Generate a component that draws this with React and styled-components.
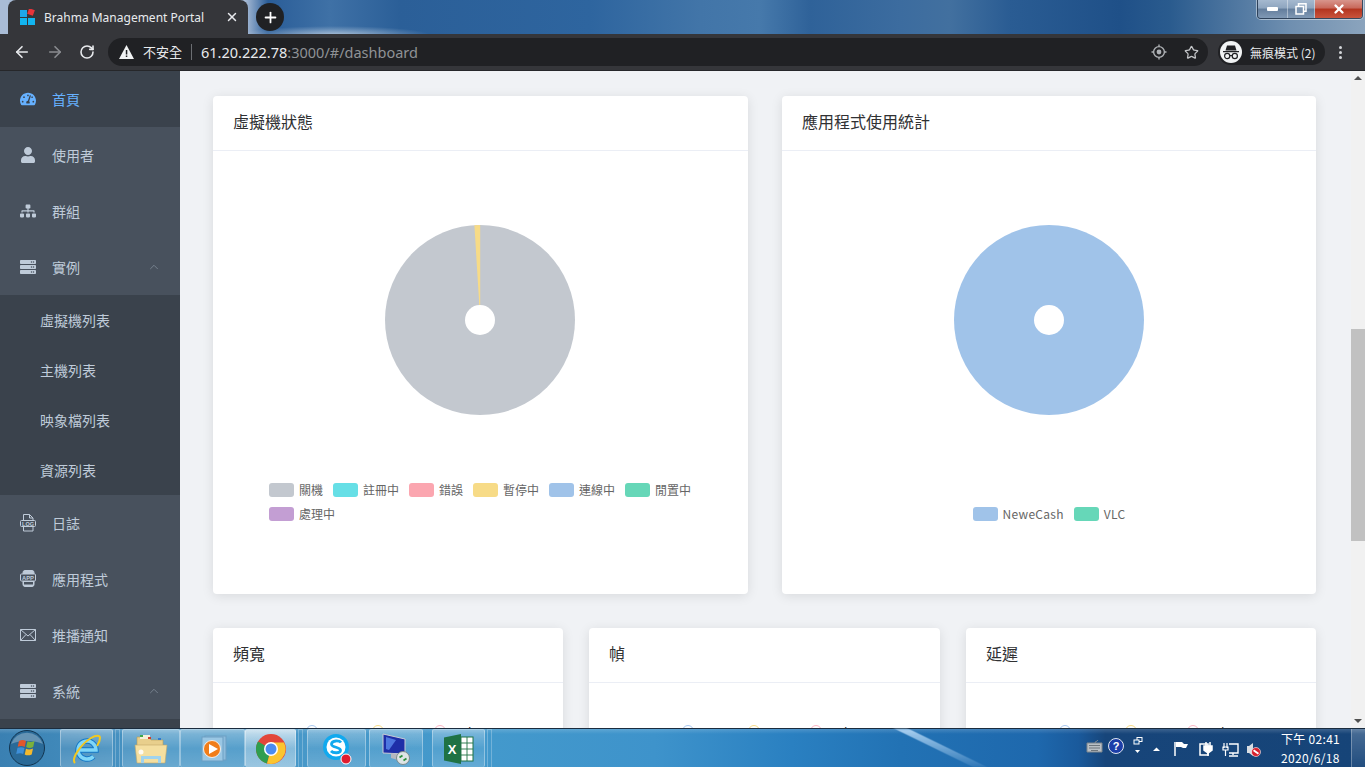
import React from 'react'
import styled, { createGlobalStyle } from 'styled-components'
import { FaTachometerAlt, FaUser, FaSitemap, FaServer } from 'react-icons/fa'
import { ArrowLeft, ArrowRight, RotateCw, Star, Plus, X, ChevronUp } from 'lucide-react'

const GlobalStyle = createGlobalStyle`
  html, body { margin: 0; height: 100%; overflow: hidden; }
  body { font-family: "Noto Sans CJK TC", "Noto Sans", sans-serif; }
  #root { height: 100%; }
`

const Screen = styled.div`
  height: 767px;
  display: flex;
  flex-direction: column;
  overflow: hidden;
`

// Browser top
const TabStrip = styled.div`
  height: 34px;
  flex: none;
  display: flex;
  align-items: flex-end;
  position: relative;
  background:
    radial-gradient(95px 9px at 335px 35px, rgba(255,255,255,.55), transparent),
    linear-gradient(90deg, #a9bcd6 0, #a9bcd6 245px, #2a5d98 268px, #3f71a6 330px, #2b5f98 400px, #2e659f 590px, #4275a8 700px, #4679ab 760px, #2f6299 810px, #3c6c9f 900px, #42709f 950px, #2a5c93 1010px, #1f5088 1120px, #2a5b8e 1170px, #6f8fb0 1290px, #8ba4bd 1365px);
`

const Tab = styled.div`
  width: 240px;
  height: 34px;
  margin-left: 8px;
  background: #35363a;
  border-radius: 8px 8px 0 0;
  display: flex;
  align-items: center;
  padding: 0 9px 0 12px;
  box-sizing: border-box;
  color: #e8eaed;
  font: 12px "Noto Sans", sans-serif;
`

const TabTitle = styled.span`
  flex: 1;
  margin-left: 8px;
  white-space: nowrap;
`

const NewTab = styled.div`
  width: 28px;
  height: 28px;
  margin: 0 0 3px 8px;
  border-radius: 50%;
  background: #202124;
  color: #fff;
  display: flex;
  align-items: center;
  justify-content: center;
`

const WindowButtons = styled.div`
  position: absolute;
  right: 2px;
  top: 0;
  height: 18px;
  display: flex;
  border: 1px solid rgba(30,45,65,.75);
  border-top: 0;
  border-radius: 0 0 4px 4px;
  overflow: hidden;
  box-shadow: 0 0 0 1px rgba(255,255,255,.45);
`

const WinBtn = styled.div`
  width: ${p => p.$w}px;
  display: flex;
  align-items: center;
  justify-content: center;
  background: ${p => p.$close
    ? 'linear-gradient(#d8958c 0, #c8685a 45%, #b3341f 50%, #c9543c 100%)'
    : 'linear-gradient(#a5b9cf 0, #8ea5bf 45%, #637d9c 50%, #8099b5 100%)'};
  border-right: ${p => p.$close ? '0' : '1px solid rgba(255,255,255,.4)'};
`

const Toolbar = styled.div`
  height: 37px;
  flex: none;
  background: #35363a;
  border-bottom: 1px solid #26272a;
  box-sizing: border-box;
  display: flex;
  align-items: center;
  padding-left: 13px;
  position: relative;
`

const NavIcons = styled.div`
  display: flex;
  gap: 15px;
  align-items: center;
  width: 95px;
  flex: none;
`

const Omnibox = styled.div`
  width: 1100px;
  height: 28px;
  flex: none;
  border-radius: 14px;
  background: #202124;
  display: flex;
  align-items: center;
  padding: 0 9px 0 11px;
  box-sizing: border-box;
  color: #e8eaed;
  font-size: 13px;
`

const Insecure = styled.span`
  margin-left: 9px;
  padding-right: 9px;
  font-size: 13px;
  border-right: 1px solid #6b6e72;
  line-height: 16px;
`

const Url = styled.span`
  margin-left: 9px;
  font: 14.5px "Noto Sans", sans-serif;
  flex: 1;
  color: #8f9296;
  b { font-weight: 400; color: #e8eaed; }
`

const BookmarkStar = styled(Star)`
  margin-left: 17px;
`

const Incognito = styled.div`
  margin-left: 10px;
  width: 107px;
  height: 26px;
  border-radius: 13px;
  background: #202124;
  display: flex;
  align-items: center;
  padding-left: 2px;
  box-sizing: border-box;
  color: #e8eaed;
  font-size: 12px;
  white-space: nowrap;
  flex: none;
`

const IncognitoFace = styled.div`
  width: 22px;
  height: 22px;
  border-radius: 50%;
  background: #f1f3f4;
  display: flex;
  align-items: center;
  justify-content: center;
  margin-right: 8px;
`

const Dots = styled.div`
  margin-left: 14px;
  display: flex;
  flex-direction: column;
  gap: 2px;
  i { width: 3px; height: 3px; border-radius: 50%; background: #d5d7da; display: block; }
`

// Page
const Main = styled.div`
  flex: 1;
  min-height: 0;
  display: flex;
  background: #f0f2f5;
`

const Sidebar = styled.nav`
  width: 180px;
  flex: none;
  background: #48515d;
  overflow: hidden;
`

const MenuItem = styled.div`
  height: 56px;
  display: flex;
  align-items: center;
  padding-left: 20px;
  position: relative;
  box-sizing: border-box;
  color: ${p => p.$active ? '#66b1ff' : '#bfcbd9'};
  background: ${p => p.$active ? '#3a424c' : 'transparent'};
  font-size: 14px;
  svg { flex: none; }
`

const MenuLabel = styled.span`
  margin-left: 16px;
`

const Caret = styled.span`
  position: absolute;
  right: 19px;
  top: 50%;
  margin-top: -7px;
  color: #7b8794;
  line-height: 0;
`

const SubMenu = styled.div`
  background: #3a424c;
  min-height: ${p => p.$h}px;
`

const SubItem = styled.div`
  height: 50px;
  display: flex;
  align-items: center;
  padding-left: 40px;
  font-size: 14px;
  color: #bfcbd9;
`

const Content = styled.div`
  flex: 1;
  overflow: hidden;
  padding: 25px 35px 0 33px;
`

const TopRow = styled.div`
  display: grid;
  grid-template-columns: 535px 534px;
  gap: 34px;
`

const BottomRow = styled.div`
  display: grid;
  grid-template-columns: 350px 351px 350px;
  gap: 26px;
  margin-top: 34px;
`

const Card = styled.section`
  background: #fff;
  border-radius: 4px;
  box-shadow: 0 2px 12px rgba(0,0,0,.1);
  height: ${p => p.$h}px;
  display: flex;
  flex-direction: column;
  box-sizing: border-box;
`

const CardHeader = styled.header`
  height: 55px;
  flex: none;
  border-bottom: 1px solid #ebeef5;
  box-sizing: border-box;
  padding: 0 20px 4px;
  display: flex;
  align-items: center;
  font-size: 16px;
  color: #303133;
`

const ChartBody = styled.div`
  display: flex;
  flex-direction: column;
  align-items: center;
  padding-top: 74px;
`

const PieSvg = styled.svg`
  width: 190px;
  height: 190px;
  display: block;
  margin-left: ${p => p.$nudge || 0}px;
`

const Legend = styled.div`
  width: ${p => p.$w}px;
  margin-top: ${p => p.$mt}px;
  display: flex;
  flex-wrap: wrap;
  justify-content: ${p => p.$center ? 'center' : 'flex-start'};
  row-gap: 10px;
  column-gap: 10px;
`

const LegendItem = styled.div`
  display: flex;
  align-items: center;
  height: 14px;
  font: 12px "Noto Sans CJK TC", "Noto Sans", sans-serif;
  line-height: 12px;
  color: #666;
  letter-spacing: ${p => p.$latin ? '.3px' : '0'};
  white-space: nowrap;
`

const Swatch = styled.i`
  width: 25px;
  height: 14px;
  border-radius: 3px;
  margin-right: 5px;
  background: ${p => p.$c};
`

const LineLegend = styled.div`
  display: flex;
  gap: 17px;
  margin-top: 41px;
  padding-left: 93px;
`

const LineLegendItem = styled.div`
  display: flex;
  align-items: center;
  font: 13px "Liberation Sans", sans-serif;
  color: #333;
  height: 14px;
  &::before {
    content: '';
    width: 10px;
    height: 10px;
    border-radius: 50%;
    border: 1px solid ${p => p.$c};
    margin-right: 12px;
  }
`

const Scrollbar = styled.div`
  width: 14px;
  flex: none;
  background: #f1f1f1;
  display: flex;
  flex-direction: column;
  align-items: center;
  justify-content: space-between;
  padding: 5px 0;
  box-sizing: border-box;
  position: relative;
`

const Thumb = styled.div`
  position: absolute;
  left: 0;
  right: 0;
  top: 258px;
  height: 212px;
  background: #c1c1c1;
`

const Arrow = styled.i`
  width: 0;
  height: 0;
  border-left: 4px solid transparent;
  border-right: 4px solid transparent;
  ${p => p.$down ? 'border-top: 4px solid #505050;' : 'border-bottom: 4px solid #505050;'}
`

// Windows taskbar
const Taskbar = styled.div`
  height: 39px;
  flex: none;
  display: flex;
  align-items: stretch;
  border-top: 1px solid #1b2c3e;
  box-sizing: border-box;
  background:
    linear-gradient(rgba(255,255,255,.16), transparent 5px),
    linear-gradient(90deg, #3a80b2 0, #4a97c6 12%, #4399cc 36%, #3e93cb 48%, #2a80c1 58%, #2272b4 66%, #1e68ad 76%, #1a5a9c 79%, #17457a 81%, #164478 100%);
  position: relative;
  &::after {
    content: '';
    position: absolute;
    left: 934px;
    top: 0;
    bottom: 0;
    width: 14px;
    transform: skewX(64deg);
    background: linear-gradient(rgba(190,222,250,.85), rgba(190,222,250,.1));
    filter: blur(1px);
  }
`

const Orb = styled.div`
  width: 60px;
  padding-left: 8px;
  box-sizing: border-box;
  flex: none;
  display: flex;
  align-items: center;
`

const TaskButton = styled.div`
  width: ${p => p.$w}px;
  margin-left: ${p => p.$ml || 0}px;
  flex: none;
  box-sizing: border-box;
  display: flex;
  align-items: center;
  justify-content: center;
  border: 1px solid rgba(255,255,255,.35);
  border-bottom: 0;
  border-radius: 2px;
  background: ${p => p.$active
    ? 'linear-gradient(rgba(255,255,255,.7), rgba(255,255,255,.35) 50%, rgba(255,255,255,.45))'
    : 'linear-gradient(rgba(255,255,255,.32), rgba(255,255,255,.08) 50%, rgba(255,255,255,.18))'};
`

const TaskEnd = styled.div`
  width: 5px;
  margin-left: 2px;
  flex: none;
  border: 1px solid rgba(255,255,255,.25);
  border-bottom: 0;
  box-sizing: border-box;
`

const Tray = styled.div`
  margin-left: auto;
  display: flex;
  align-items: center;
  color: #fff;
  height: 100%;
  position: relative;
  z-index: 1;
`

const Clock = styled.div`
  width: 70px;
  margin-left: 14px;
  font-size: 12px;
  line-height: 19px;
  text-align: left;
  color: #fff;
  letter-spacing: .3px;
`

const ShowDesktop = styled.div`
  width: 13px;
  height: 100%;
  border-left: 1px solid rgba(255,255,255,.3);
  background: linear-gradient(rgba(255,255,255,.22), rgba(255,255,255,.05));
`

const LogIcon = () => (
  <svg width="16" height="18" viewBox="0 0 16 18" fill="none" stroke="#bfcbd9">
    <path d="M3.5.5h6l3.5 3.5v13H3.5zM9.5.5V4H13" />
    <rect x=".5" y="6.5" width="15" height="6" fill="#48515d" rx="1" />
    <text x="8" y="11.5" fontSize="5.5" fill="#bfcbd9" stroke="none" textAnchor="middle" fontFamily="Liberation Sans" fontWeight="700">LOG</text>
  </svg>
)

const AppIcon = () => (
  <svg width="16" height="18" viewBox="0 0 16 18" fill="none" stroke="#bfcbd9">
    <rect x="3" y=".5" width="11" height="16" rx="2" fill="#bfcbd9" />
    <rect x="0.5" y="4" width="15" height="7" rx="1" fill="#48515d" />
    <text x="8" y="9.6" fontSize="5.8" fill="#bfcbd9" stroke="none" textAnchor="middle" fontFamily="Liberation Sans" fontWeight="700">APP</text>
    <rect x="4" y="12" width="9" height="2.5" fill="#48515d" stroke="none" />
  </svg>
)

const MailIcon = () => (
  <svg width="16" height="12" viewBox="0 0 16 12" fill="none" stroke="#bfcbd9">
    <path d="M.5.5h15v11H.5zM.5.5 8 7l7.5-6.5M.5 11.5 6 5.5M15.5 11.5 10 5.5" />
  </svg>
)

const Pie = ({ wedge, nudge }) => (
  <PieSvg viewBox="0 0 190 190" $nudge={nudge}>
    <circle cx="95" cy="95" r="95" fill={wedge ? '#c3c8cf' : '#a0c3e9'} />
    {wedge && <path d="M95.2 95 L95.2 0 A95 95 0 0 0 89.4 .2 Z" fill="#f7db87" />}
    <circle cx="95" cy="95" r="15" fill="#fff" />
  </PieSvg>
)

const Favicon = () => (
  <svg width="16" height="16" viewBox="0 0 16 16">
    <rect x="0" y="1" width="7" height="7" fill="#1ea7ea" />
    <rect x="0" y="9" width="7" height="7" fill="#12b5f0" />
    <rect x="8" y="9" width="7" height="7" fill="#12b5f0" />
    <rect x="8" y="0" width="6" height="6" fill="#e8343a" transform="rotate(20 11 3)" />
  </svg>
)

const IncognitoIcon = () => (
  <svg width="18" height="16" viewBox="0 0 18 16" fill="#202124">
    <path d="M5 1.5h8l1.5 5h-11zM1 7h16v1.3H1z" />
    <g fill="none" stroke="#202124" strokeWidth="1.2">
      <circle cx="5.2" cy="12" r="2.6" />
      <circle cx="12.8" cy="12" r="2.6" />
      <path d="M7.8 11.6h2.4" />
    </g>
  </svg>
)

const TargetIcon = () => (
  <svg width="16" height="16" viewBox="0 0 16 16" fill="none" stroke="#aeb1b5" strokeWidth="1.4">
    <circle cx="8" cy="8" r="5.4" />
    <circle cx="8" cy="8" r="2.4" fill="#aeb1b5" stroke="none" />
    <path d="M8 .5v2M8 13.5v2M.5 8h2M13.5 8h2" />
  </svg>
)

const WinOrb = () => (
  <svg width="38" height="38" viewBox="0 0 38 38">
    <circle cx="19" cy="19" r="17.5" fill="#2a6a98" stroke="#12344f" />
    <path d="M3 15a17 17 0 0 1 32 0c-8-4-24-4-32 0z" fill="#fff" opacity=".28" />
    <path d="M11 12c3-1.5 5-1 7 0l-1.3 6c-2-1-4-1.3-7-.2z" fill="#e2572c" />
    <path d="M19.5 12.3c2 1 4 1.2 7-.2l-1.3 6c-3 1.3-5 1-7-.1z" fill="#7bb13c" />
    <path d="M9.5 18.8c3-1 5-.8 7 .2l-1.3 6c-2-1-4-1.2-7 .1z" fill="#3e8fd8" />
    <path d="M18 19.7c2 1 4 1.2 7-.2l-1.3 6c-3 1.3-5 1-7-.1z" fill="#f4b92d" />
  </svg>
)

const IeIcon = () => (
  <svg width="32" height="34" viewBox="0 0 32 34" fill="none">
    <path d="M7 18h18a9 9 0 1 0-2.6 6.4" stroke="#1478c8" strokeWidth="5.5" />
    <path d="M7 18h18a9 9 0 1 0-2.6 6.4" stroke="#7fd6f8" strokeWidth="3.5" />
    <path d="M4 31C0 27 9 13 20 6c5-3 9-3 9 0 0 2-1 5-3 8" stroke="#f2c820" strokeWidth="2" />
  </svg>
)

const FolderIcon = () => (
  <svg width="34" height="32" viewBox="0 0 34 32">
    <path d="M3 4h12l2 3h12v8H3z" fill="#e8cf8c" stroke="#b79d58" strokeWidth=".6" />
    <rect x="6" y="2" width="10" height="4" fill="#f5f0d8" />
    <rect x="6" y="2" width="3" height="2" fill="#3fa84a" />
    <rect x="14" y="4" width="3" height="2" fill="#cf3b2a" />
    <rect x="24" y="5" width="3" height="2" fill="#2f7ad0" />
    <path d="M1 12h32l-2 18H3z" fill="#f4dfa0" stroke="#c3a968" strokeWidth=".6" />
    <path d="M7 30v-7h20v7h-3v-4H10v4z" fill="#9fd3ee" />
    <circle cx="7" cy="19" r="2.5" fill="#fff" opacity=".85" />
  </svg>
)

const WmpIcon = () => (
  <svg width="30" height="30" viewBox="0 0 30 30">
    <rect x="7" y="2" width="21" height="24" fill="#8dbcdc" stroke="#6c9fc4" />
    <rect x="4" y="3" width="21" height="24" fill="#9ac7e4" stroke="#6c9fc4" />
    <circle cx="14" cy="15" r="8.5" fill="#f07d1a" stroke="#fff" strokeWidth=".8" />
    <path d="M11 10l9 5-9 5z" fill="#fff" />
  </svg>
)

const ChromeIcon = () => (
  <svg width="30" height="30" viewBox="0 0 30 30">
    <circle cx="15" cy="15" r="15" fill="#e2463a" />
    <path d="M15 15 2 7.5A15 15 0 0 0 11 29.5z" fill="#2f9e4f" />
    <path d="M15 8.5h13A15 15 0 0 1 11 29.5L15 15z" fill="#fbc52f" />
    <circle cx="15" cy="15" r="7" fill="#fff" />
    <circle cx="15" cy="15" r="5.5" fill="#4a8cf0" />
  </svg>
)

const SkypeIcon = () => (
  <svg width="32" height="32" viewBox="0 0 32 32">
    <circle cx="15" cy="14" r="13" fill="#11a9ee" />
    <circle cx="15" cy="14" r="9.5" fill="#fff" />
    <path d="M20 9.5c-1.5-2-9-2.5-9.5 1.5-.5 4 9.5 2.5 9 6.5-.4 3-7.5 2.8-9.5.5" fill="none" stroke="#11a9ee" strokeWidth="2.8" />
    <circle cx="25" cy="26" r="5" fill="#e01b2f" stroke="#fff" />
  </svg>
)

const RdpIcon = () => (
  <svg width="32" height="34" viewBox="0 0 32 34">
    <path d="M3 2l22 5v15L3 21z" fill="#1e2fa8" stroke="#c9ccd6" />
    <path d="M6 5l10 3-7 10-3-1z" fill="#4e78e0" />
    <path d="M11 21v5l10 3 2-6z" fill="#b5b8c0" />
    <circle cx="23" cy="26" r="6.5" fill="#dfe5e6" stroke="#7d8a8a" />
    <path d="M19.5 25.5l3-2M26.5 26.5l-3 2" stroke="#2b8f3c" strokeWidth="1.8" />
  </svg>
)

const ExcelIcon = () => (
  <svg width="32" height="32" viewBox="0 0 32 32">
    <rect x="14" y="4" width="16" height="24" fill="#fff" stroke="#1f7244" />
    <path d="M18 4v24M24 4v24M14 10h16M14 16h16M14 22h16" stroke="#1f7244" strokeWidth=".9" />
    <path d="M1 4.5 18 1v30L1 27.5z" fill="#1f7244" />
    <text x="9" y="21" fontSize="13" fontWeight="700" fill="#fff" textAnchor="middle" fontFamily="Liberation Sans">X</text>
  </svg>
)

const TrayIcons = () => (
  <svg width="182" height="24" viewBox="0 0 182 24" fill="none">
    <path d="M2 7h15v9H2zM10 7c0-2 2-1 3-3" fill="#b9bfc4" stroke="#7d858c" />
    <path d="M4 9.5h11M4 12h11M6 14.5h7" stroke="#6e767c" />
    <circle cx="31" cy="10" r="7.5" fill="#1c3ea8" stroke="#dfe6ef" />
    <text x="31" y="14" fontSize="11" fontWeight="700" fill="#fff" textAnchor="middle" fontFamily="Liberation Sans">?</text>
    <rect x="52" y="1.5" width="5" height="4" stroke="#fff" />
    <rect x="49" y="4" width="5" height="4" stroke="#fff" fill="#1a5590" />
    <path d="M50 14h5l-2.5 3z" fill="#fff" />
    <path d="M68 15h7l-3.5-3.5z" fill="#fff" />
    <path d="M90 6v14" stroke="#fff" strokeWidth="1.5" />
    <path d="M91 6h6l2 2h4l-2 4h-3l-2-1h-5z" fill="#fff" />
    <path d="M115 8h8v11h-8z" stroke="#fff" strokeWidth="1.5" />
    <path d="M121 6v4M125 6v4M119 10h8v4l-4 3-4-3zM123 17v3" stroke="#fff" strokeWidth="1.5" fill="#fff" />
    <path d="M139 7v5M142 7v5M138 11h5v3h-5zM140.5 14v6" stroke="#fff" strokeWidth="1.2" />
    <path d="M144 8h9v9h-9M148 17v2M144 20h9" stroke="#fff" strokeWidth="1.4" />
    <path d="M162 10h2l4-3v13l-4-3h-2z" fill="#d9dde2" />
    <circle cx="171" cy="16" r="4.5" fill="#d8202c" stroke="#fff" strokeWidth=".6" />
    <rect x="168" y="15" width="6" height="2" fill="#fff" transform="rotate(35 171 16)" />
  </svg>
)

const menuTop = [
  { label: '使用者', icon: <FaUser size={16} /> },
  { label: '群組', icon: <FaSitemap size={16} /> },
  { label: '實例', icon: <FaServer size={16} />, caret: true },
]
const subItems = ['虛擬機列表', '主機列表', '映象檔列表', '資源列表']
const menuBottom = [
  { label: '日誌', icon: <LogIcon /> },
  { label: '應用程式', icon: <AppIcon /> },
  { label: '推播通知', icon: <MailIcon /> },
  { label: '系統', icon: <FaServer size={16} />, caret: true },
]

const renderItem = item => (
  <MenuItem key={item.label}>
    {item.icon}
    <MenuLabel>{item.label}</MenuLabel>
    {item.caret && <Caret><ChevronUp size={14} strokeWidth={1.5} /></Caret>}
  </MenuItem>
)

const vmLegend = [
  ['關機', '#c3c8cf'], ['註冊中', '#66dfe6'], ['錯誤', '#fba6b0'], ['暫停中', '#f7db87'],
  ['連線中', '#a0c3e9'], ['閒置中', '#66d7b8'], ['處理中', '#c39ed3'],
]

const lineCards = ['頻寬', '幀', '延遲']

export default function App() {
  return (
    <Screen>
      <GlobalStyle />
      <TabStrip>
        <Tab>
          <Favicon />
          <TabTitle>Brahma Management Portal</TabTitle>
          <X size={14} strokeWidth={2.5} />
        </Tab>
        <NewTab><Plus size={17} strokeWidth={2.5} /></NewTab>
        <WindowButtons>
          <WinBtn $w={29}>
            <svg width="11" height="4"><rect width="11" height="4" rx="1" fill="#fff" /></svg>
          </WinBtn>
          <WinBtn $w={26}>
            <svg width="12" height="12" fill="none" stroke="#fff" strokeWidth="1.5"><rect x="3.5" y=".8" width="7.5" height="7.5" /><rect x="1" y="3.5" width="7.5" height="7.5" fill="#7a93b0" /></svg>
          </WinBtn>
          <WinBtn $w={47} $close>
            <X size={14} strokeWidth={4} color="#fff" />
          </WinBtn>
        </WindowButtons>
      </TabStrip>
      <Toolbar>
        <NavIcons>
          <ArrowLeft size={18} color="#e8eaed" strokeWidth={2.2} />
          <ArrowRight size={18} color="#8a8c90" strokeWidth={2.2} />
          <RotateCw size={16} color="#e8eaed" strokeWidth={2.4} />
        </NavIcons>
        <Omnibox>
          <svg width="15" height="14" viewBox="0 0 15 14"><path d="M7.5 0 15 14H0z" fill="#f1f3f4" /><rect x="6.8" y="5" width="1.5" height="4.5" fill="#202124" /><rect x="6.8" y="10.5" width="1.5" height="1.5" fill="#202124" /></svg>
          <Insecure>不安全</Insecure>
          <Url><b>61.20.222.78</b>:3000/#/dashboard</Url>
          <TargetIcon />
          <BookmarkStar size={15} color="#c4c6c9" strokeWidth={2} />
        </Omnibox>
        <Incognito>
          <IncognitoFace><IncognitoIcon /></IncognitoFace>
          無痕模式 (2)
        </Incognito>
        <Dots><i /><i /><i /></Dots>
      </Toolbar>
      <Main>
        <Sidebar>
          <MenuItem $active>
            <FaTachometerAlt size={16} />
            <MenuLabel>首頁</MenuLabel>
          </MenuItem>
          {menuTop.map(renderItem)}
          <SubMenu $h={200}>
            {subItems.map(s => <SubItem key={s}>{s}</SubItem>)}
          </SubMenu>
          {menuBottom.map(renderItem)}
          <SubMenu $h={20} />
        </Sidebar>
        <Content>
          <TopRow>
            <Card $h={498}>
              <CardHeader>虛擬機狀態</CardHeader>
              <ChartBody>
                <Pie wedge nudge={-1} />
                <Legend $w={423} $mt={68}>
                  {vmLegend.map(([name, c]) => (
                    <LegendItem key={name}><Swatch $c={c} />{name}</LegendItem>
                  ))}
                </Legend>
              </ChartBody>
            </Card>
            <Card $h={498}>
              <CardHeader>應用程式使用統計</CardHeader>
              <ChartBody>
                <Pie />
                <Legend $w={430} $mt={92} $center>
                  <LegendItem $latin><Swatch $c="#a0c3e9" />NeweCash</LegendItem>
                  <LegendItem $latin><Swatch $c="#66d7b8" />VLC</LegendItem>
                </Legend>
              </ChartBody>
            </Card>
          </TopRow>
          <BottomRow>
            {lineCards.map(title => (
              <Card $h={300} key={title}>
                <CardHeader>{title}</CardHeader>
                <LineLegend>
                  <LineLegendItem $c="#a9c8f0">max</LineLegendItem>
                  <LineLegendItem $c="#f7db87">avg</LineLegendItem>
                  <LineLegendItem $c="#fbb6c4">min</LineLegendItem>
                </LineLegend>
              </Card>
            ))}
          </BottomRow>
        </Content>
        <Scrollbar>
          <Arrow />
          <Thumb />
          <Arrow $down />
        </Scrollbar>
      </Main>
      <Taskbar>
        <Orb><WinOrb /></Orb>
        <TaskButton $w={53}><IeIcon /></TaskButton>
        <TaskEnd />
        <TaskButton $w={58} $ml={2}><FolderIcon /></TaskButton>
        <TaskButton $w={65}><WmpIcon /></TaskButton>
        <TaskButton $w={51} $active><ChromeIcon /></TaskButton>
        <TaskEnd />
        <TaskButton $w={59} $ml={4}><SkypeIcon /></TaskButton>
        <TaskButton $w={54} $ml={3}><RdpIcon /></TaskButton>
        <TaskButton $w={53} $ml={9}><ExcelIcon /></TaskButton>
        <TaskEnd />
        <Tray>
          <TrayIcons />
          <Clock>下午 02:41<br />2020/6/18</Clock>
          <ShowDesktop />
        </Tray>
      </Taskbar>
    </Screen>
  )
}
